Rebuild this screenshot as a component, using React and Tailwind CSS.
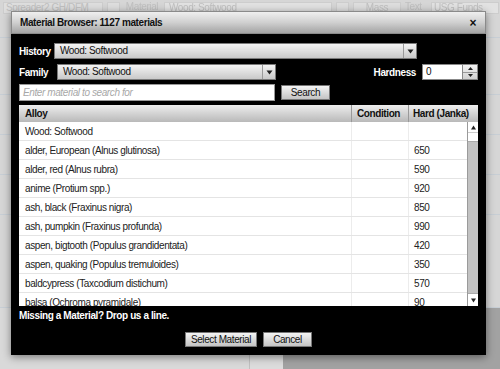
import React from "react";

const rows = [
  ["Wood: Softwood", ""],
  ["alder, European (Alnus glutinosa)", "650"],
  ["alder, red (Alnus rubra)", "590"],
  ["anime (Protium spp.)", "920"],
  ["ash, black (Fraxinus nigra)", "850"],
  ["ash, pumpkin (Fraxinus profunda)", "990"],
  ["aspen, bigtooth (Populus grandidentata)", "420"],
  ["aspen, quaking (Populus tremuloides)", "350"],
  ["baldcypress (Taxcodium distichum)", "570"],
  ["balsa (Ochroma pyramidale)", "90"],
];

function Arrow() {
  return (
    <svg width="7" height="5" viewBox="0 0 7 5">
      <path d="M0.5 0.5 L6.5 0.5 L3.5 4.5 Z" fill="#222" />
    </svg>
  );
}

function Select({ w, text }) {
  return (
    <div className={`${w} h-[16px] flex border border-[#7a7a7a] bg-gradient-to-b from-[#f4f4f4] to-[#c9c9c9]`}>
      <div className="flex-1 pl-[5px] text-[10px] leading-[14px] text-[#111] whitespace-nowrap">{text}</div>
      <div className="w-[13px] border-l border-[#9a9a9a] flex items-center justify-center">
        <Arrow />
      </div>
    </div>
  );
}

export default function App() {
  return (
    <div className="relative w-[500px] h-[369px] overflow-hidden bg-[#d6d6d6] font-['Liberation_Sans',Arial,sans-serif] tracking-[-0.4px]">
      {/* faded background page */}
      <div className="flex flex-col h-full opacity-50">
        <div className="flex items-start gap-[4px] pl-[3px] pt-[2px] h-[20px] text-[10px] leading-[10px] text-[#aaa]">
          <div className="w-[100px] h-[12px] border border-[#c4c4c4] bg-[#e6e6e6] pl-[2px] whitespace-nowrap overflow-hidden">Spreader2 GH/DFM</div>
          <div className="w-[13px] h-[12px] border border-[#c4c4c4] bg-[#e6e6e6]" />
          <div className="w-[36px] text-center">Material</div>
          <div className="w-[168px] h-[12px] border border-[#c4c4c4] bg-[#eee] pl-[4px]">Wood: Softwood</div>
          <div className="w-[13px] h-[12px] border border-[#c4c4c4] bg-[#e6e6e6]" />
          <div className="w-[48px] h-[12px] border border-[#c4c4c4] bg-[#e6e6e6] text-center">Mass</div>
          <div className="w-[22px]">Text</div>
          <div className="w-[68px] h-[12px] border border-[#c4c4c4] bg-[#eee] pl-[2px]">USG Funds</div>
        </div>
        <div className="flex flex-1">
          <div className="flex-1 flex flex-col">
            <div className="h-[18px] border-b border-[#b9c6d4]" />
            <div className="h-[57px] border-b border-[#b9c6d4]" />
            <div className="h-[40px] border-b border-[#b9c6d4]" />
            <div className="h-[40px] border-b border-[#b9c6d4]" />
            <div className="h-[40px] border-b border-[#b9c6d4]" />
            <div className="h-[93px] border-b border-[#b9c6d4]" />
            <div className="flex flex-1">
              <div className="w-[250px] border-r border-[#aaa] bg-[#dcdcdc]" />
              <div className="w-[33px] bg-[#e2e2e2]" />
              <div className="flex-1 bg-[#6e6e6e]" />
            </div>
          </div>
        </div>
      </div>

      {/* modal dialog */}
      <div className="absolute left-[11px] top-[11px] w-[475px] h-[344px] flex flex-col shadow-[0_2px_8px_rgba(0,0,0,0.45)]">
        <div className="h-[23px] flex items-center justify-between pl-[8px] pr-[9px] bg-gradient-to-b from-[#efefef] via-[#d0d0d0] to-[#a4a4a4] border border-[#8a8a8a]">
          <span className="text-[10px] font-bold text-[#111]">Material Browser: 1127 materials</span>
          <span className="text-[12px] font-bold text-[#111] leading-none">×</span>
        </div>
        <div className="flex-1 bg-black flex flex-col px-[8px] pt-[9px]">
          <div className="flex items-center h-[16px]">
            <div className="w-[35px] text-[10px] font-bold text-white">History</div>
            <Select w="w-[363px]" text="Wood: Softwood" />
          </div>
          <div className="flex items-center h-[16px] mt-[5px]">
            <div className="w-[38px] text-[10px] font-bold text-white">Family</div>
            <Select w="w-[219px]" text="Wood: Softwood" />
            <div className="flex-1" />
            <div className="text-[10px] font-bold text-white mr-[6px]">Hardness</div>
            <div className="w-[41px] h-[16px] bg-white border border-[#888] text-[10px] leading-[14px] pl-[3px] text-[#111]">0</div>
            <div className="w-[15px] h-[16px] flex flex-col border border-l-0 border-[#888] bg-gradient-to-b from-[#f4f4f4] to-[#d0d0d0]">
              <div className="flex-1 flex items-center justify-center border-b border-[#999]">
                <svg width="5" height="3" viewBox="0 0 5 3"><path d="M2.5 0 L5 3 L0 3 Z" fill="#222" /></svg>
              </div>
              <div className="flex-1 flex items-center justify-center">
                <svg width="5" height="3" viewBox="0 0 5 3"><path d="M0 0 L5 0 L2.5 3 Z" fill="#222" /></svg>
              </div>
            </div>
          </div>
          <div className="flex items-center h-[17px] mt-[4px]">
            <div className="w-[256px] h-[17px] bg-white border border-[#999] text-[10px] italic leading-[15px] pl-[3px] text-[#a8a8a8]">
              Enter material to search for
            </div>
            <div className="ml-[6px] w-[49px] h-[15px] border border-[#777] bg-gradient-to-b from-[#f4f4f4] to-[#c4c4c4] text-[10px] leading-[13px] text-center text-[#111]">
              Search
            </div>
          </div>
          <div className="mt-[4px] flex flex-col bg-white">
            <div className="flex h-[17px] bg-gradient-to-b from-[#eeeeee] to-[#b9b9b9] text-[10px] font-bold text-[#111] leading-[17px] whitespace-nowrap">
              <div className="w-[333px] pl-[6px] border-r border-[#999]">Alloy</div>
              <div className="w-[57px] pl-[5px] border-r border-[#999]">Condition</div>
              <div className="flex-1 pl-[4px]">Hard (Janka)</div>
            </div>
            <div className="relative h-[184px] overflow-hidden">
              {rows.map(([name, hard], i) => (
                <div key={i} className="flex h-[19px] border-b border-[#e4e4e4] text-[10px] text-[#222] leading-[20px] whitespace-nowrap">
                  <div className="w-[333px] pl-[6px] border-r border-[#ececec]">{name}</div>
                  <div className="w-[57px] border-r border-[#ececec]" />
                  <div className="flex-1 pl-[5px]">{hard}</div>
                </div>
              ))}
              <div className="absolute right-0 top-0 bottom-0 w-[11px] flex flex-col bg-[#c2c2c2] border-l border-[#9a9a9a]">
                <div className="h-[11px] bg-white flex items-center justify-center border-b border-[#ccc]">
                  <svg width="5" height="5" viewBox="0 0 5 5"><path d="M2.5 0.5 L5 4.5 L0 4.5 Z" fill="#222" /></svg>
                </div>
                <div className="h-[9px] bg-white border-b border-[#aaa]" />
                <div className="flex-1" />
                <div className="h-[13px] bg-white flex items-center justify-center border-t border-[#aaa]">
                  <svg width="5" height="5" viewBox="0 0 5 5"><path d="M0 0.5 L5 0.5 L2.5 4.5 Z" fill="#222" /></svg>
                </div>
              </div>
            </div>
          </div>
          <div className="mt-[3px] text-[10px] font-bold text-white leading-[13px]">Missing a Material? Drop us a line.</div>
          <div className="flex justify-center gap-[6px] mt-[10px]">
            <div className="w-[72px] h-[15px] border border-[#777] bg-gradient-to-b from-[#f4f4f4] to-[#c4c4c4] text-[10px] leading-[13px] text-center text-[#111] whitespace-nowrap">Select Material</div>
            <div className="w-[49px] h-[15px] border border-[#777] bg-gradient-to-b from-[#f4f4f4] to-[#c4c4c4] text-[10px] leading-[13px] text-center text-[#111]">Cancel</div>
          </div>
        </div>
      </div>
    </div>
  );
}
